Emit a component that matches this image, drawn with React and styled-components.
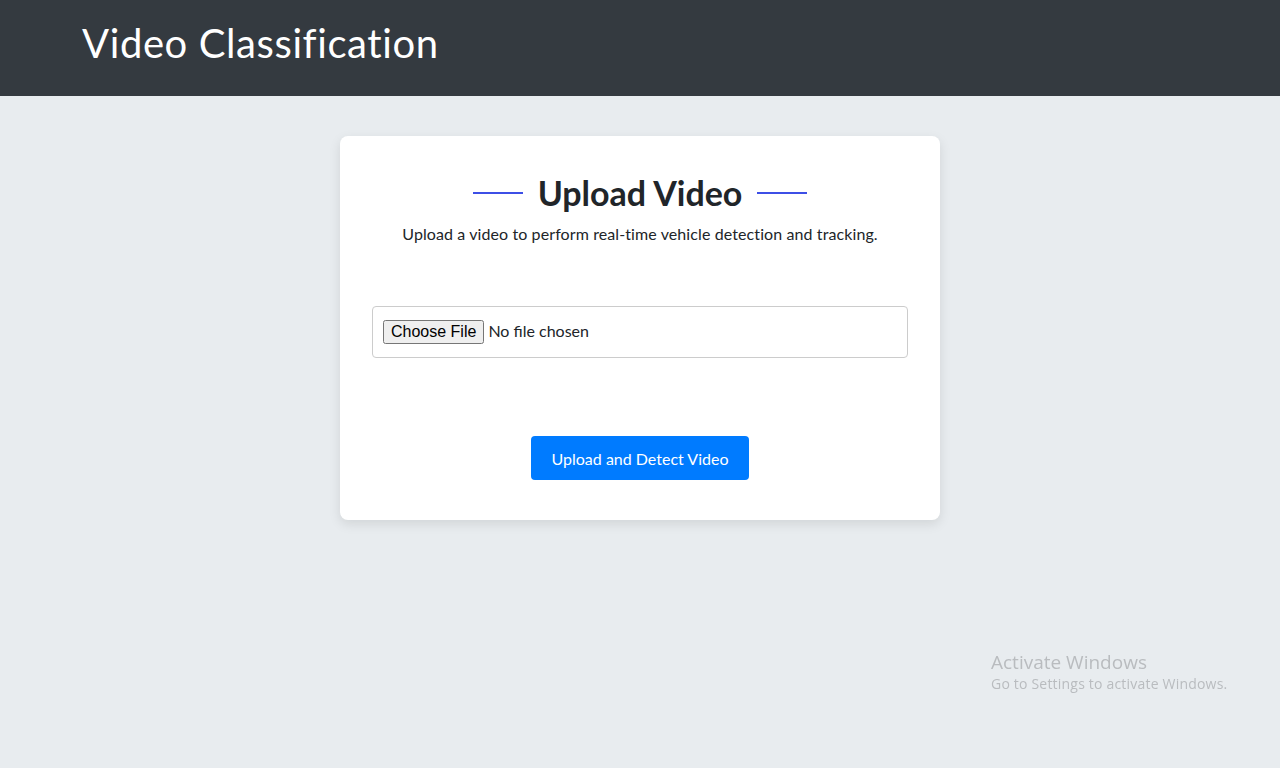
import React from "react";
import styled, { createGlobalStyle } from "styled-components";

const Global = createGlobalStyle`
  html, body { margin: 0; padding: 0; }
  body {
    background: #e8ecef;
    font-family: "Nunito", "Lato", "Open Sans", sans-serif;
    color: #212529;
    min-height: 768px;
  }
`;

const Header = styled.header`
  background: #343a40;
  height: 96px;
  display: flex;
  align-items: center;
  padding: 0 82px 10px;
  box-sizing: border-box;
`;

const Brand = styled.h1`
  margin: 0;
  color: #ffffff;
  font-family: "Lato", sans-serif;
  font-weight: 400;
  font-size: 40px;
  letter-spacing: 0.6px;
`;

const Main = styled.main`
  display: flex;
  justify-content: center;
  padding-top: 40px;
`;

const Card = styled.section`
  width: 600px;
  box-sizing: border-box;
  background: #ffffff;
  border-radius: 8px;
  box-shadow: 0 4px 12px rgba(0, 0, 0, 0.1);
  padding: 37px 32px 40px;
  display: flex;
  flex-direction: column;
  align-items: center;
`;

const TitleRow = styled.div`
  display: flex;
  align-items: center;
  gap: 15px;
`;

const Rule = styled.span`
  width: 50px;
  height: 2px;
  background: #3d4fe6;
`;

const Title = styled.h2`
  margin: 0;
  font-family: "Lato", sans-serif;
  font-weight: 700;
  font-size: 34px;
  line-height: 40px;
  color: #212529;
`;

const Subtitle = styled.p`
  margin: 9px 0 0;
  font-family: "Lato", sans-serif;
  font-size: 16px;
  line-height: 24px;
  letter-spacing: 0.1px;
  color: #212529;
`;

const FileBox = styled.div`
  align-self: stretch;
  margin-top: 60px;
  border: 1px solid #cccccc;
  border-radius: 4px;
  padding: 10px;
  height: 52px;
  box-sizing: border-box;
  display: flex;
  align-items: center;
`;

const FileInput = styled.input`
  font-family: "Lato", sans-serif;
  font-size: 16px;
  color: #212529;
`;

const SubmitButton = styled.button`
  margin-top: 78px;
  background: #007bff;
  color: #ffffff;
  border: none;
  border-radius: 4px;
  height: 44px;
  padding: 0 21px;
  font-family: "Lato", sans-serif;
  font-size: 16px;
  cursor: pointer;
`;

const Watermark = styled.div`
  position: fixed;
  left: 991px;
  top: 650px;
  color: #b9bcbf;
  font-family: "Open Sans", "Noto Sans", sans-serif;
`;

const WatermarkTitle = styled.div`
  font-size: 19px;
  line-height: 24px;
`;

const WatermarkText = styled.div`
  font-size: 14px;
  line-height: 20px;
  letter-spacing: 0.2px;
`;

export default function App() {
  return (
    <>
      <Global />
      <Header>
        <Brand>Video Classification</Brand>
      </Header>
      <Main>
        <Card>
          <TitleRow>
            <Rule />
            <Title>Upload Video</Title>
            <Rule />
          </TitleRow>
          <Subtitle>
            Upload a video to perform real-time vehicle detection and tracking.
          </Subtitle>
          <FileBox>
            <FileInput type="file" accept="video/*" />
          </FileBox>
          <SubmitButton type="button">Upload and Detect Video</SubmitButton>
        </Card>
      </Main>
      <Watermark>
        <WatermarkTitle>Activate Windows</WatermarkTitle>
        <WatermarkText>Go to Settings to activate Windows.</WatermarkText>
      </Watermark>
    </>
  );
}
